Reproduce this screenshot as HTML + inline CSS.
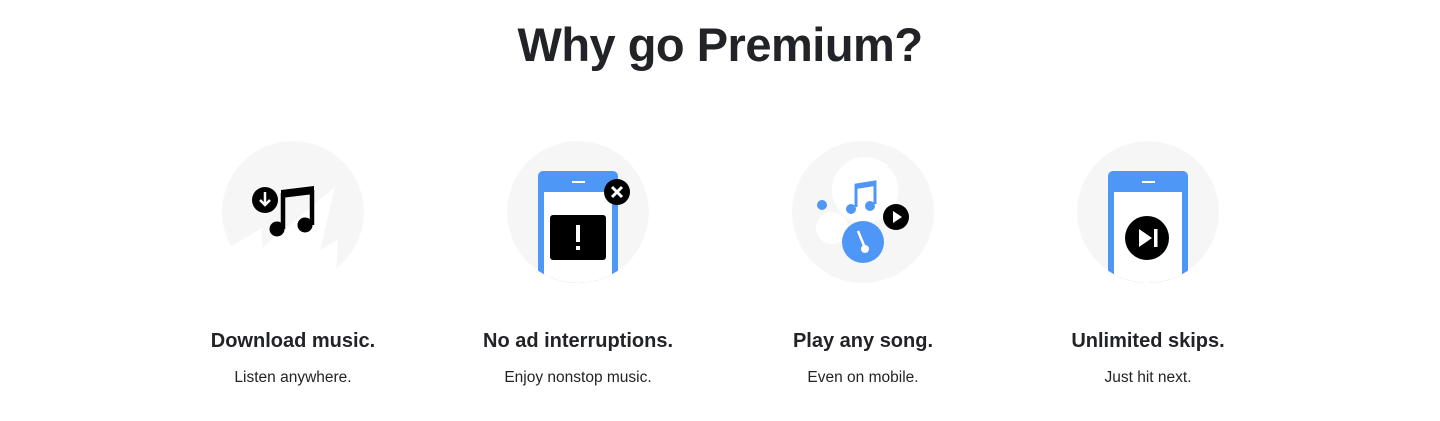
<!DOCTYPE html>
<html><head><meta charset="utf-8"><style>
html,body{margin:0;padding:0;background:#fff;width:1440px;height:421px;overflow:hidden;font-family:"Liberation Sans",sans-serif;color:#222326}
h1{position:absolute;left:0;width:1440px;top:17px;margin:0;text-align:center;font-size:47px;font-weight:bold;letter-spacing:-0.5px}
.t{position:absolute;width:300px;text-align:center;font-size:20px;font-weight:bold;top:330px}
.s{position:absolute;width:300px;text-align:center;font-size:15.5px;top:369px}
svg{position:absolute;left:0;top:0}
</style></head><body>
<h1>Why go Premium?</h1>
<svg width="1440" height="421" viewBox="0 0 1440 421">
<defs><clipPath id="c1"><circle cx="293" cy="212" r="71"/></clipPath><clipPath id="c2"><circle cx="578" cy="212" r="71"/></clipPath><clipPath id="c4"><circle cx="1148" cy="212" r="71"/></clipPath></defs>
<!-- icon 1 -->
<g clip-path="url(#c1)">
<circle cx="293" cy="212" r="71" fill="#f6f6f6"/>
<polygon points="210,252 230,247 262,228 262,248 335,187 320,250 338,240 335,290 210,290" fill="#fff"/>
</g>
<circle cx="265" cy="200" r="13" fill="#000"/>
<path d="M265 192v13M260 200l5 5 5-5" stroke="#fff" stroke-width="2.5" fill="none"/>
<path d="M283 229V193M312 225V190" stroke="#000" stroke-width="4.5" fill="none"/>
<path d="M281 190l33-4v8l-33 4z" fill="#000"/>
<circle cx="277" cy="229" r="7.5" fill="#000"/>
<circle cx="305" cy="225" r="7.5" fill="#000"/>
<!-- icon 2 -->
<g clip-path="url(#c2)">
<circle cx="578" cy="212" r="71" fill="#f6f6f6"/>
<rect x="538" y="171" width="80" height="120" rx="5" fill="#4f97f6"/>
<rect x="544" y="192" width="68" height="100" fill="#fff"/>
</g>
<rect x="572" y="181" width="13" height="2" fill="#fff"/>
<rect x="550" y="215" width="56" height="45" rx="3" fill="#000"/>
<rect x="576" y="225" width="4" height="17" fill="#fff"/><rect x="576" y="246" width="4" height="4" fill="#fff"/>
<circle cx="617" cy="192" r="13" fill="#000"/>
<path d="M612 187l10 10M622 187l-10 10" stroke="#fff" stroke-width="3"/>
<!-- icon 3 -->
<circle cx="863" cy="212" r="71" fill="#f6f6f6"/>
<circle cx="865" cy="190" r="33" fill="#fff"/>
<circle cx="832" cy="228" r="16" fill="#fff"/>
<circle cx="822" cy="205" r="5" fill="#4f97f6"/>
<path d="M856 207V185l19-3v22" stroke="#4f97f6" stroke-width="3" fill="none"/>
<path d="M856 184l19-3v5l-19 3z" fill="#4f97f6"/>
<circle cx="851" cy="209" r="5" fill="#4f97f6"/>
<circle cx="870" cy="206" r="5" fill="#4f97f6"/>
<circle cx="863" cy="242" r="21" fill="#4f97f6"/>
<path d="M858 231l7 17" stroke="#fff" stroke-width="2.5"/>
<circle cx="865" cy="249" r="4" fill="#fff"/>
<circle cx="896" cy="217" r="13" fill="#000"/>
<path d="M893 211v12l9-6z" fill="#fff"/>
<!-- icon 4 -->
<g clip-path="url(#c4)">
<circle cx="1148" cy="212" r="71" fill="#f6f6f6"/>
<rect x="1108" y="171" width="80" height="120" rx="5" fill="#4f97f6"/>
<rect x="1114" y="192" width="68" height="100" fill="#fff"/>
</g>
<rect x="1142" y="181" width="13" height="2" fill="#fff"/>
<circle cx="1147" cy="238" r="22" fill="#000"/>
<path d="M1139 229v18l13-9z" fill="#fff"/>
<rect x="1154" y="229" width="3.5" height="18" fill="#fff"/>
</svg>
<div class="t" style="left:143px">Download music.</div><div class="s" style="left:143px">Listen anywhere.</div>
<div class="t" style="left:428px">No ad interruptions.</div><div class="s" style="left:428px">Enjoy nonstop music.</div>
<div class="t" style="left:713px">Play any song.</div><div class="s" style="left:713px">Even on mobile.</div>
<div class="t" style="left:998px">Unlimited skips.</div><div class="s" style="left:998px">Just hit next.</div>
</body></html>
